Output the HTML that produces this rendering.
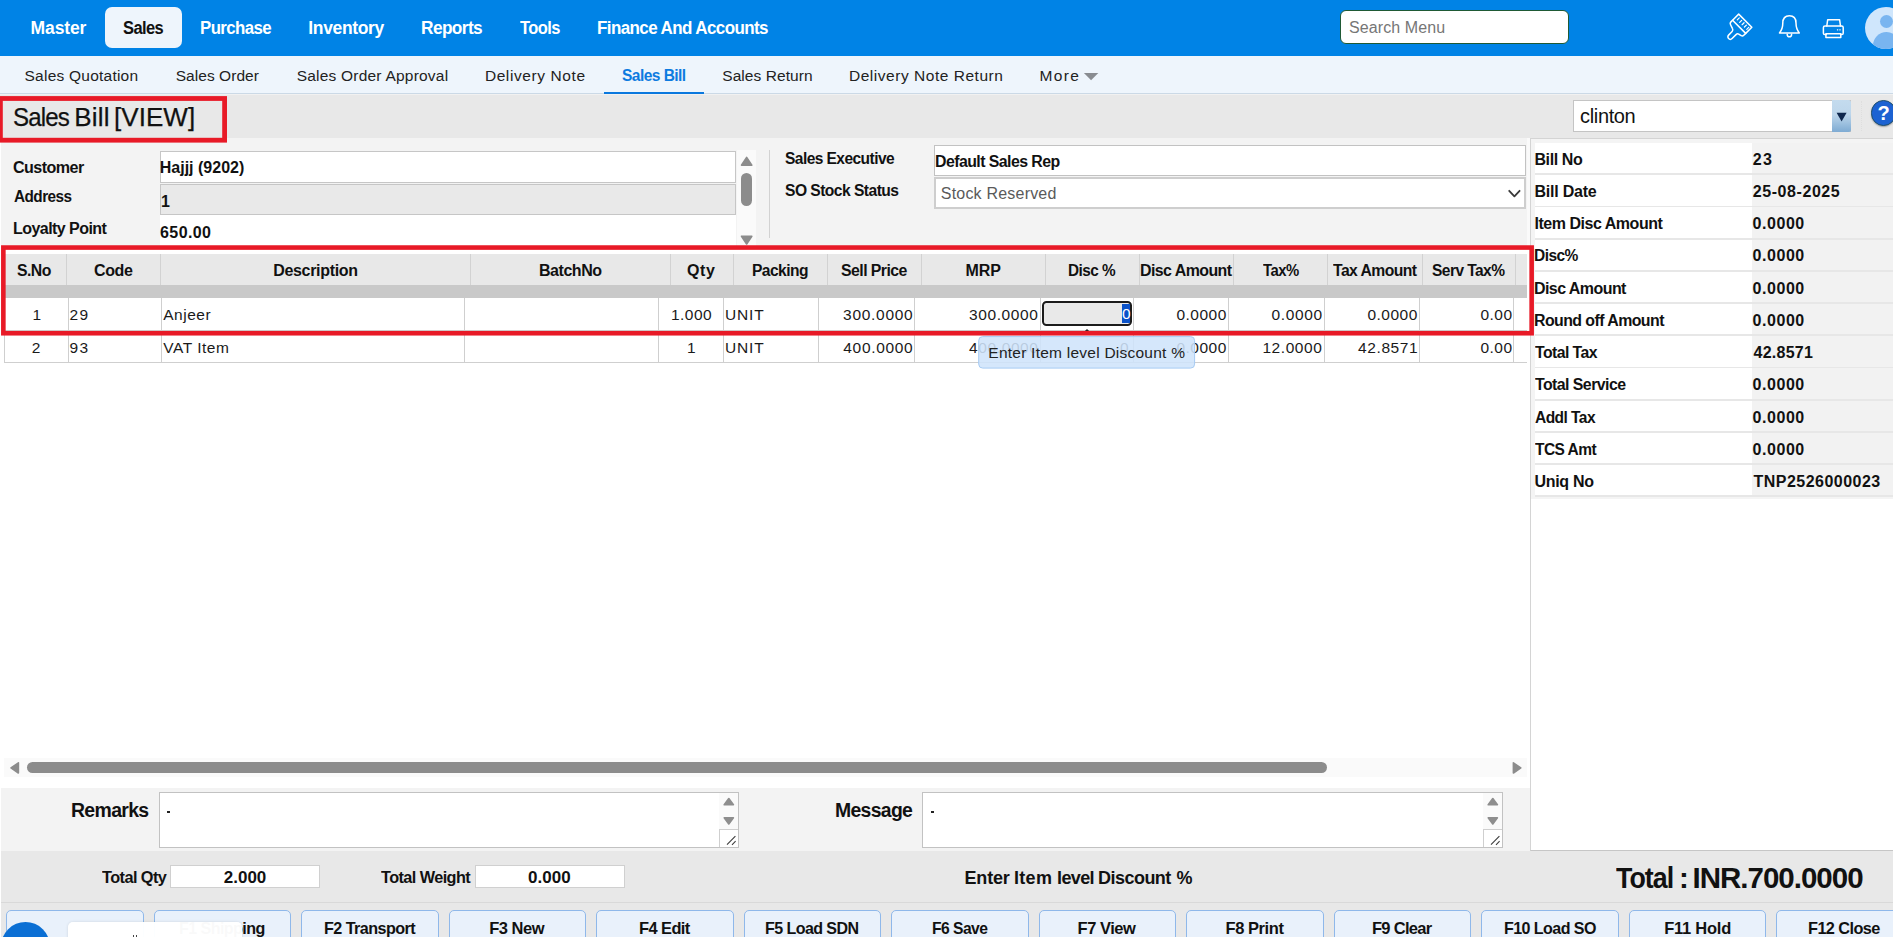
<!DOCTYPE html>
<html lang="en">
<head>
<meta charset="utf-8">
<title>Sales Bill [VIEW]</title>
<style>
html,body{margin:0;padding:0;}
body{width:1893px;height:937px;overflow:hidden;position:relative;background:#ffffff;font-family:"Liberation Sans",Arial,sans-serif;}
.a{position:absolute;box-sizing:border-box;}
.t{position:absolute;height:60px;line-height:60px;white-space:pre;font-family:"Liberation Sans",Arial,sans-serif;z-index:5;}
.vl{position:absolute;width:1px;background:#cfcfcf;}
.hl{position:absolute;height:1px;background:#cfcfcf;}
.btn{position:absolute;top:910px;height:40px;width:137.8px;box-sizing:border-box;border:1px solid #8fb8ea;border-radius:5px;background:#e9f1fb;}
.rl{position:absolute;left:1534.5px;width:217.7px;height:30.4px;background:#ffffff;}
.rv{position:absolute;left:1752.2px;width:140.8px;height:30.4px;background:#f2f2f2;}
.rs{position:absolute;left:1534.5px;width:358.5px;height:1.8px;background:#e7e7e7;}
</style>
</head>
<body>
<!-- top bar -->
<div class="a" id="topbar" style="left:0;top:0;width:1893px;height:56px;background:#0083e6;"></div>
<div class="a" style="left:105.2px;top:7.1px;width:76.6px;height:40.6px;border-radius:7px;background:#eef5fc;"></div>
<div class="a" style="left:1340px;top:10px;width:229px;height:34px;border-radius:6px;background:#fff;border:1px solid #1f5a35;"></div>

<svg class="a" style="left:1715px;top:5px;" width="50" height="45" viewBox="1715 5 50 45"><g fill="none" stroke="#ffffff" stroke-width="1.5" stroke-linejoin="round" stroke-linecap="round" transform="translate(1738.7 14.1) rotate(45)">
<path d="M0 0 H18.6 V8.7 H0 Z"/>
<path d="M0 8.7 V11 Q0 12.9 1.8 13.3 L5.6 14.5 Q7.7 15.1 7.7 17 V22 A2.45 2.45 0 0 0 12.6 22 V16.4 Q12.6 14.6 14.2 14.2 L17 13.5 Q18.6 13.1 18.6 11.4 V8.7"/>
<path d="M3.1 2.3 V5.1 M6.5 2.3 V5.1 M9.9 2.3 V5.1 M13.2 2.3 V5.1 M16.5 2.3 V5.1" stroke-width="1.2"/>
</g></svg>
<svg class="a" style="left:1776px;top:13px;" width="27" height="27" viewBox="0 0 27 27"><g fill="none" stroke="#ffffff" stroke-width="1.5" stroke-linejoin="round" stroke-linecap="round">
<path d="M13.4 2.7 C8.6 2.7 6.8 6.3 6.8 10 C6.8 15.4 5.4 17.6 3.5 19.9 L23.3 19.9 C21.4 17.6 20 15.4 20 10 C20 6.3 18.2 2.7 13.4 2.7 Z"/>
<path d="M11.2 21.2 C11.2 22.9 12.2 23.8 13.4 23.8 C14.6 23.8 15.6 22.9 15.6 21.2"/>
</g></svg>
<svg class="a" style="left:1820px;top:16px;" width="26" height="24" viewBox="0 0 26 24"><g fill="none" stroke="#ffffff" stroke-width="1.5" stroke-linejoin="round" stroke-linecap="round">
<path d="M6.8 10 L7.7 3.7 H19.6 L20.5 10"/>
<path d="M6.2 18.6 H4.8 Q3.4 18.6 3.4 17.2 V11.6 Q3.4 10 5 10 H21.6 Q23.2 10 23.2 11.6 V17.2 Q23.2 18.6 21.8 18.6 H20.6"/>
<path d="M5.9 17.7 H20.8 V21.5 H5.9 Z"/>
<path d="M17.4 13.8 H17.8 M19.8 13.8 H20.2" stroke-width="1.2"/>
</g></svg>
<div class="a" style="left:1865px;top:7px;width:42px;height:42px;border-radius:50%;background:#cfe6fc;overflow:hidden;">
<div class="a" style="left:14.5px;top:8px;width:13px;height:13px;border-radius:50%;background:#79b5f0;"></div>
<div class="a" style="left:7.5px;top:25.2px;width:27px;height:27px;border-radius:50%;background:#79b5f0;"></div>
</div>

<!-- sub nav -->
<div class="a" style="left:0;top:56px;width:1893px;height:37px;background:#eef5fc;"></div>
<div class="a" style="left:0;top:93px;width:1893px;height:1px;background:#cbd9e6;"></div>
<div class="a" style="left:604px;top:92px;width:100px;height:2px;background:#0a78de;"></div>
<svg class="a" style="left:1082px;top:71px;" width="19" height="12"><polygon points="1.9,2.0 16.3,2.0 9.1,9.3" fill="#898c91"/></svg>
<!-- title bar -->
<div class="a" style="left:0;top:94px;width:1893px;height:44px;background:#e8e8e8;"></div>
<div class="a" style="left:0;top:94px;width:1893px;height:1px;background:#f1f1f1;"></div>
<!-- clinton combo -->
<div class="a" style="left:1573px;top:100px;width:277.6px;height:31.6px;background:#fff;border:1px solid #c4c4c4;"></div>
<div class="a" style="left:1831.8px;top:100px;width:19.2px;height:31.6px;border-radius:0 2.5px 2.5px 0;background:linear-gradient(#c4dbee 0%,#bdd6eb 45%,#7eabd3 100%);"></div>
<svg class="a" style="left:1835px;top:111px;" width="13" height="12"><polygon points="1.6,1.7 11.6,1.7 6.6,10.5" fill="#10284e"/></svg>
<div class="a" style="left:1861px;top:101px;width:0;height:30px;border-left:1px dotted #dedede;"></div>
<div class="a" style="left:1870.8px;top:100px;width:25.6px;height:25.6px;border-radius:50%;background:#1c62d2;border:1.4px solid #1d4f6e;box-shadow:0 1px 1.5px rgba(0,0,0,.3);"></div>
<!-- form area -->
<div class="a" style="left:1px;top:138px;width:1529px;height:108px;background:#f3f3f3;"></div>
<div class="a" style="left:160px;top:214px;width:576px;height:32px;background:#ffffff;"></div>
<div class="a" style="left:160px;top:151px;width:576px;height:32px;background:#fff;border:1px solid #c6c6c6;"></div>
<div class="a" style="left:160px;top:184px;width:576px;height:31px;background:#e9e9e9;border:1px solid #c6c6c6;"></div>
<div class="a" style="left:736.6px;top:149.8px;width:19.2px;height:96px;background:#fafafa;"></div>
<svg class="a" style="left:739px;top:155px;" width="16" height="13"><polygon points="2.5,10.2 12.8,10.2 7.65,2.4" fill="#8c8c8c" stroke="#8c8c8c" stroke-width="1.6" stroke-linejoin="round"/></svg>
<div class="a" style="left:741px;top:173px;width:11px;height:32.8px;border-radius:5.5px;background:#8c8c8c;"></div>
<svg class="a" style="left:739px;top:234px;" width="16" height="13"><polygon points="2.5,2.2 12.8,2.2 7.65,10" fill="#8c8c8c" stroke="#8c8c8c" stroke-width="1.6" stroke-linejoin="round"/></svg>
<div class="a" style="left:769px;top:150px;width:1px;height:88px;background:#d2d2d2;"></div>
<div class="a" style="left:934px;top:145px;width:592px;height:31px;background:#fff;border:1px solid #c2c2c2;"></div>
<div class="a" style="left:934px;top:177px;width:592px;height:32px;background:#fff;border:2px solid #cecece;"></div>
<svg class="a" style="left:1507px;top:188px;" width="16" height="12" viewBox="0 0 16 12"><path d="M2.2 2.8 L7.4 8.4 L12.6 2.8" fill="none" stroke="#3a3a3a" stroke-width="1.8" stroke-linecap="round" stroke-linejoin="round"/></svg>
<div class="a" style="left:1527px;top:138px;width:3px;height:108px;background:#fafafa;"></div>
<!-- right panel -->
<div class="a" style="left:1530px;top:138px;width:363px;height:713px;background:#ffffff;border-left:1px solid #d4d4d4;border-top:1px solid #d4d4d4;border-bottom:1px solid #c6c6c6;"></div>
<div class="a" style="left:1531px;top:139px;width:362px;height:360px;background:#f4f4f4;"></div>
<div class="rl" style="top:143.0px"></div><div class="rv" style="top:143.0px"></div>
<div class="rs" style="top:173.4px"></div>
<div class="rl" style="top:175.2px"></div><div class="rv" style="top:175.2px"></div>
<div class="rs" style="top:205.6px"></div>
<div class="rl" style="top:207.4px"></div><div class="rv" style="top:207.4px"></div>
<div class="rs" style="top:237.8px"></div>
<div class="rl" style="top:239.6px"></div><div class="rv" style="top:239.6px"></div>
<div class="rs" style="top:270.0px"></div>
<div class="rl" style="top:271.8px"></div><div class="rv" style="top:271.8px"></div>
<div class="rs" style="top:302.2px"></div>
<div class="rl" style="top:304.0px"></div><div class="rv" style="top:304.0px"></div>
<div class="rs" style="top:334.4px"></div>
<div class="rl" style="top:336.2px"></div><div class="rv" style="top:336.2px"></div>
<div class="rs" style="top:366.6px"></div>
<div class="rl" style="top:368.4px"></div><div class="rv" style="top:368.4px"></div>
<div class="rs" style="top:398.8px"></div>
<div class="rl" style="top:400.6px"></div><div class="rv" style="top:400.6px"></div>
<div class="rs" style="top:431.0px"></div>
<div class="rl" style="top:432.8px"></div><div class="rv" style="top:432.8px"></div>
<div class="rs" style="top:463.2px"></div>
<div class="rl" style="top:465.0px"></div><div class="rv" style="top:465.0px"></div>
<div class="rs" style="top:495.4px"></div>
<!-- grid -->
<div class="a" style="left:5px;top:254px;width:1522px;height:31px;background:#e8e8e8;"></div>
<div class="a" style="left:5px;top:285px;width:1522px;height:12.5px;background:#c9c9c9;"></div>
<div class="vl" style="left:66.0px;top:254px;height:31px;background:#d2d2d2"></div>
<div class="vl" style="left:160.0px;top:254px;height:31px;background:#d2d2d2"></div>
<div class="vl" style="left:470.0px;top:254px;height:31px;background:#d2d2d2"></div>
<div class="vl" style="left:670.0px;top:254px;height:31px;background:#d2d2d2"></div>
<div class="vl" style="left:733.0px;top:254px;height:31px;background:#d2d2d2"></div>
<div class="vl" style="left:827.0px;top:254px;height:31px;background:#d2d2d2"></div>
<div class="vl" style="left:921.0px;top:254px;height:31px;background:#d2d2d2"></div>
<div class="vl" style="left:1045.0px;top:254px;height:31px;background:#d2d2d2"></div>
<div class="vl" style="left:1139.0px;top:254px;height:31px;background:#d2d2d2"></div>
<div class="vl" style="left:1233.0px;top:254px;height:31px;background:#d2d2d2"></div>
<div class="vl" style="left:1327.0px;top:254px;height:31px;background:#d2d2d2"></div>
<div class="vl" style="left:1422.0px;top:254px;height:31px;background:#d2d2d2"></div>
<div class="vl" style="left:1515.0px;top:254px;height:31px;background:#d2d2d2"></div>
<div class="vl" style="left:3.8px;top:297.5px;height:65px"></div>
<div class="vl" style="left:67.8px;top:297.5px;height:65px"></div>
<div class="vl" style="left:160.7px;top:297.5px;height:65px"></div>
<div class="vl" style="left:464.2px;top:297.5px;height:65px"></div>
<div class="vl" style="left:657.7px;top:297.5px;height:65px"></div>
<div class="vl" style="left:722.8px;top:297.5px;height:65px"></div>
<div class="vl" style="left:818.0px;top:297.5px;height:65px"></div>
<div class="vl" style="left:913.9px;top:297.5px;height:65px"></div>
<div class="vl" style="left:1040.0px;top:297.5px;height:65px"></div>
<div class="vl" style="left:1132.8px;top:297.5px;height:65px"></div>
<div class="vl" style="left:1228.2px;top:297.5px;height:65px"></div>
<div class="vl" style="left:1324.0px;top:297.5px;height:65px"></div>
<div class="vl" style="left:1418.8px;top:297.5px;height:65px"></div>
<div class="vl" style="left:1513.1px;top:297.5px;height:65px"></div>
<div class="hl" style="left:4px;top:330.3px;width:1523px"></div>
<div class="hl" style="left:4px;top:362px;width:1523px"></div>
<!-- grid input -->
<div class="a" style="left:1042px;top:301.3px;width:89.8px;height:24.4px;background:#e9e9e9;border:2px solid #1c1c1c;border-radius:4.5px;z-index:4;"></div>
<div class="a" style="left:1121.9px;top:304px;width:7.9px;height:19px;background:#0b52c9;z-index:4;"></div>
<!-- tooltip -->
<svg class="a" style="left:1081px;top:326px;z-index:3;" width="12" height="7"><polygon points="3.4,5.6 8.6,5.6 6.0,2.9" fill="#2a2a2a"/></svg>
<svg class="a" style="left:970px;top:330px;z-index:8;" width="235" height="45" viewBox="970 330 235 45"><rect x="978.7" y="336.6" width="215.9" height="31.5" rx="4" fill="rgba(207,228,250,0.88)" stroke="#a6cbf3" stroke-width="1"/></svg>
<!-- red boxes -->
<svg class="a" style="left:0;top:90px;z-index:7;" width="1540" height="250" viewBox="0 90 1540 250"><rect x="0.4" y="98.5" width="224.2" height="41.7" fill="none" stroke="#e81a27" stroke-width="4.8"/><rect x="3.35" y="247.55" width="1528.3" height="85.7" fill="none" stroke="#e81a27" stroke-width="4.6"/></svg>
<!-- h scrollbar -->
<div class="a" style="left:4px;top:758px;width:1523px;height:19px;background:#fafafa;"></div>
<div class="a" style="left:27px;top:762px;width:1300px;height:11px;border-radius:5.5px;background:#8c8c8c;"></div>
<svg class="a" style="left:8px;top:760px;" width="13" height="16"><polygon points="10.4,2.8 10.4,13.0 3.0,7.9" fill="#8c8c8c" stroke="#8c8c8c" stroke-width="1.6" stroke-linejoin="round"/></svg>
<svg class="a" style="left:1511px;top:760px;" width="13" height="16"><polygon points="2.4,2.8 2.4,13.0 9.8,7.9" fill="#8c8c8c" stroke="#8c8c8c" stroke-width="1.6" stroke-linejoin="round"/></svg>
<!-- remarks -->
<div class="a" style="left:1px;top:788px;width:1529px;height:63px;background:#f3f3f3;"></div>
<div class="a" style="left:158.5px;top:792.3px;width:580.3px;height:55.3px;background:#fff;border:1px solid #c2c2c2;"></div>
<div class="a" style="left:719.2px;top:793.3px;width:18.6px;height:53.3px;background:#fafafa;"></div>
<svg class="a" style="left:721.8px;top:796px;" width="14" height="31"><polygon points="2.2,8.8 11.4,8.8 6.8,2.6" fill="#8e8e8e" stroke="#8e8e8e" stroke-width="1.6" stroke-linejoin="round"/><polygon points="2.2,21.8 11.4,21.8 6.8,28" fill="#8e8e8e" stroke="#8e8e8e" stroke-width="1.6" stroke-linejoin="round"/></svg>
<div class="a" style="left:719.2px;top:828.8px;width:18.6px;height:17.8px;background:#fff;border-left:1px solid #cfcfcf;border-top:1px solid #cfcfcf;"></div>
<svg class="a" style="left:725.8px;top:835px;" width="11" height="11" viewBox="0 0 11 11"><path d="M1 9.6 L9.4 1.2 M6 9.8 L9.6 6.2" stroke="#3c3c3c" stroke-width="1.1" fill="none"/></svg>
<div class="a" style="left:167.1px;top:811.2px;width:2.6px;height:2.2px;background:#222;"></div>
<div class="a" style="left:922.4px;top:792.3px;width:580.3px;height:55.3px;background:#fff;border:1px solid #c2c2c2;"></div>
<div class="a" style="left:1483.1px;top:793.3px;width:18.6px;height:53.3px;background:#fafafa;"></div>
<svg class="a" style="left:1485.7px;top:796px;" width="14" height="31"><polygon points="2.2,8.8 11.4,8.8 6.8,2.6" fill="#8e8e8e" stroke="#8e8e8e" stroke-width="1.6" stroke-linejoin="round"/><polygon points="2.2,21.8 11.4,21.8 6.8,28" fill="#8e8e8e" stroke="#8e8e8e" stroke-width="1.6" stroke-linejoin="round"/></svg>
<div class="a" style="left:1483.1px;top:828.8px;width:18.6px;height:17.8px;background:#fff;border-left:1px solid #cfcfcf;border-top:1px solid #cfcfcf;"></div>
<svg class="a" style="left:1489.7px;top:835px;" width="11" height="11" viewBox="0 0 11 11"><path d="M1 9.6 L9.4 1.2 M6 9.8 L9.6 6.2" stroke="#3c3c3c" stroke-width="1.1" fill="none"/></svg>
<div class="a" style="left:931.0px;top:811.2px;width:2.6px;height:2.2px;background:#222;"></div>
<!-- footer -->
<div class="a" style="left:1px;top:851px;width:1892px;height:86px;background:#e8e8e8;"></div>
<div class="a" style="left:1px;top:902px;width:1892px;height:1px;background:#d9d9d9;"></div>
<div class="a" style="left:170px;top:865px;width:150px;height:23px;background:#fff;border:1px solid #d0d0d0;"></div>
<div class="a" style="left:475px;top:865px;width:150px;height:23px;background:#fff;border:1px solid #d0d0d0;"></div>
<div class="btn" style="left:6.10px"></div>
<div class="btn" style="left:153.60px"></div>
<div class="btn" style="left:301.10px"></div>
<div class="btn" style="left:448.60px"></div>
<div class="btn" style="left:596.10px"></div>
<div class="btn" style="left:743.60px"></div>
<div class="btn" style="left:891.10px"></div>
<div class="btn" style="left:1038.60px"></div>
<div class="btn" style="left:1186.10px"></div>
<div class="btn" style="left:1333.60px"></div>
<div class="btn" style="left:1481.10px"></div>
<div class="btn" style="left:1628.60px"></div>
<div class="btn" style="left:1776.10px"></div>
<!-- chat widget -->
<div class="a" style="left:0.5px;top:922.4px;width:49px;height:49px;border-radius:50%;background:#0b6fd4;z-index:10;"></div>
<div class="a" style="left:68px;top:921.6px;width:174px;height:30px;border-radius:5px 5px 0 0;background:rgba(255,255,255,0.975);z-index:10;box-shadow:0 0 3px rgba(0,0,0,.12);"></div>
<div class="a" style="left:133.4px;top:934.6px;width:1.1px;height:3px;background:#444;z-index:11;"></div><div class="a" style="left:135.6px;top:934.6px;width:1.1px;height:3px;background:#444;z-index:11;"></div>
<span class="t" style="left:30.56px;top:-2px;font-size:17.5px;font-weight:700;color:#ffffff;letter-spacing:-0.116px;">Master</span>
<span class="t" style="left:200.44px;top:-2px;font-size:17.5px;font-weight:700;color:#ffffff;letter-spacing:-0.613px;transform:scaleX(0.9611);transform-origin:0 50%;">Purchase</span>
<span class="t" style="left:308.32px;top:-2px;font-size:17.5px;font-weight:700;color:#ffffff;letter-spacing:-0.345px;">Inventory</span>
<span class="t" style="left:421.22px;top:-2px;font-size:17.5px;font-weight:700;color:#ffffff;letter-spacing:-0.613px;transform:scaleX(0.9876);transform-origin:0 50%;">Reports</span>
<span class="t" style="left:519.88px;top:-2px;font-size:17.5px;font-weight:700;color:#ffffff;letter-spacing:-0.613px;transform:scaleX(0.9401);transform-origin:0 50%;">Tools</span>
<span class="t" style="left:597.00px;top:-2px;font-size:17.5px;font-weight:700;color:#ffffff;letter-spacing:-0.613px;transform:scaleX(0.9708);transform-origin:0 50%;">Finance And Accounts</span>
<span class="t" style="left:123.00px;top:-2px;font-size:17.5px;font-weight:700;color:#111111;letter-spacing:-0.613px;transform:scaleX(0.9413);transform-origin:0 50%;">Sales</span>
<span class="t" style="left:1348.90px;top:-2px;font-size:16px;font-weight:400;color:#767676;letter-spacing:0.120px;">Search Menu</span>
<span class="t" style="left:24.56px;top:46px;font-size:15.5px;font-weight:400;color:#222222;letter-spacing:0.230px;">Sales Quotation</span>
<span class="t" style="left:175.68px;top:46px;font-size:15.5px;font-weight:400;color:#222222;letter-spacing:0.056px;">Sales Order</span>
<span class="t" style="left:296.68px;top:46px;font-size:15.5px;font-weight:400;color:#222222;letter-spacing:0.216px;">Sales Order Approval</span>
<span class="t" style="left:484.88px;top:46px;font-size:15.5px;font-weight:400;color:#222222;letter-spacing:0.593px;">Delivery Note</span>
<span class="t" style="left:722.22px;top:46px;font-size:15.5px;font-weight:400;color:#222222;letter-spacing:0.071px;">Sales Return</span>
<span class="t" style="left:849.00px;top:46px;font-size:15.5px;font-weight:400;color:#222222;letter-spacing:0.526px;">Delivery Note Return</span>
<span class="t" style="left:1039.44px;top:46px;font-size:15.5px;font-weight:400;color:#222222;letter-spacing:1.373px;">More</span>
<span class="t" style="left:622.00px;top:46px;font-size:16px;font-weight:700;color:#0d7be0;letter-spacing:-0.560px;transform:scaleX(0.9710);transform-origin:0 50%;">Sales Bill</span>
<span class="t" style="left:12.66px;top:87px;font-size:26px;font-weight:400;color:#111111;letter-spacing:-0.910px;transform:scaleX(0.9246);transform-origin:0 50%;-webkit-text-stroke:0.25px #111;">Sales</span>
<span class="t" style="left:74.34px;top:87px;font-size:26px;font-weight:400;color:#111111;letter-spacing:0.140px;-webkit-text-stroke:0.25px #111;">Bill</span>
<span class="t" style="left:114.00px;top:87px;font-size:26px;font-weight:400;color:#111111;letter-spacing:0.044px;-webkit-text-stroke:0.25px #111;">[VIEW]</span>
<span class="t" style="left:1580.12px;top:86px;font-size:20px;font-weight:400;color:#111111;letter-spacing:-0.370px;">clinton</span>
<span class="t" style="left:13.10px;top:138px;font-size:16px;font-weight:700;color:#111;letter-spacing:-0.560px;transform:scaleX(1.0055);transform-origin:0 50%;">Customer</span>
<span class="t" style="left:14.10px;top:167px;font-size:16px;font-weight:700;color:#111;letter-spacing:-0.560px;transform:scaleX(0.9565);transform-origin:0 50%;">Address</span>
<span class="t" style="left:13.10px;top:199px;font-size:16px;font-weight:700;color:#111;letter-spacing:-0.560px;transform:scaleX(1.0020);transform-origin:0 50%;">Loyalty Point</span>
<span class="t" style="left:159.78px;top:138px;font-size:16px;font-weight:700;color:#111;letter-spacing:0.000px;">Hajjj (9202)</span>
<span class="t" style="left:160.90px;top:172px;font-size:16px;font-weight:700;color:#111;letter-spacing:0.000px;">1</span>
<span class="t" style="left:160.10px;top:203px;font-size:16px;font-weight:700;color:#111;letter-spacing:0.380px;">650.00</span>
<span class="t" style="left:784.56px;top:129px;font-size:16px;font-weight:700;color:#111;letter-spacing:-0.560px;transform:scaleX(0.9690);transform-origin:0 50%;">Sales Executive</span>
<span class="t" style="left:784.56px;top:161px;font-size:16px;font-weight:700;color:#111;letter-spacing:-0.560px;transform:scaleX(0.9774);transform-origin:0 50%;">SO Stock Status</span>
<span class="t" style="left:935.12px;top:132px;font-size:16px;font-weight:700;color:#111;letter-spacing:-0.560px;transform:scaleX(0.9917);transform-origin:0 50%;">Default Sales Rep</span>
<span class="t" style="left:940.78px;top:164px;font-size:16px;font-weight:400;color:#5a5a5a;letter-spacing:0.205px;">Stock Reserved</span>
<span class="t" style="left:1534.44px;top:130px;font-size:16px;font-weight:700;color:#111;letter-spacing:-0.390px;">Bill No</span>
<span class="t" style="left:1752.76px;top:130px;font-size:16px;font-weight:700;color:#111;letter-spacing:1.240px;">23</span>
<span class="t" style="left:1534.44px;top:162px;font-size:16px;font-weight:700;color:#111;letter-spacing:-0.220px;">Bill Date</span>
<span class="t" style="left:1752.76px;top:162px;font-size:16px;font-weight:700;color:#111;letter-spacing:0.571px;">25-08-2025</span>
<span class="t" style="left:1534.44px;top:194px;font-size:16px;font-weight:700;color:#111;letter-spacing:-0.467px;">Item Disc Amount</span>
<span class="t" style="left:1752.56px;top:194px;font-size:16px;font-weight:700;color:#111;letter-spacing:0.552px;">0.0000</span>
<span class="t" style="left:1534.44px;top:226px;font-size:16px;font-weight:700;color:#111;letter-spacing:-0.560px;transform:scaleX(0.9683);transform-origin:0 50%;">Disc%</span>
<span class="t" style="left:1752.56px;top:226px;font-size:16px;font-weight:700;color:#111;letter-spacing:0.552px;">0.0000</span>
<span class="t" style="left:1534.44px;top:259px;font-size:16px;font-weight:700;color:#111;letter-spacing:-0.560px;transform:scaleX(0.9993);transform-origin:0 50%;">Disc Amount</span>
<span class="t" style="left:1752.56px;top:259px;font-size:16px;font-weight:700;color:#111;letter-spacing:0.552px;">0.0000</span>
<span class="t" style="left:1534.44px;top:291px;font-size:16px;font-weight:700;color:#111;letter-spacing:-0.560px;transform:scaleX(0.9928);transform-origin:0 50%;">Round off Amount</span>
<span class="t" style="left:1752.56px;top:291px;font-size:16px;font-weight:700;color:#111;letter-spacing:0.552px;">0.0000</span>
<span class="t" style="left:1535.44px;top:323px;font-size:16px;font-weight:700;color:#111;letter-spacing:-0.560px;transform:scaleX(0.9868);transform-origin:0 50%;">Total Tax</span>
<span class="t" style="left:1753.56px;top:323px;font-size:16px;font-weight:700;color:#111;letter-spacing:0.240px;">42.8571</span>
<span class="t" style="left:1535.44px;top:355px;font-size:16px;font-weight:700;color:#111;letter-spacing:-0.560px;transform:scaleX(0.9922);transform-origin:0 50%;">Total Service</span>
<span class="t" style="left:1752.56px;top:355px;font-size:16px;font-weight:700;color:#111;letter-spacing:0.552px;">0.0000</span>
<span class="t" style="left:1535.44px;top:388px;font-size:16px;font-weight:700;color:#111;letter-spacing:-0.560px;transform:scaleX(0.9701);transform-origin:0 50%;">Addl Tax</span>
<span class="t" style="left:1752.56px;top:388px;font-size:16px;font-weight:700;color:#111;letter-spacing:0.552px;">0.0000</span>
<span class="t" style="left:1535.44px;top:420px;font-size:16px;font-weight:700;color:#111;letter-spacing:-0.560px;transform:scaleX(0.9692);transform-origin:0 50%;">TCS Amt</span>
<span class="t" style="left:1752.56px;top:420px;font-size:16px;font-weight:700;color:#111;letter-spacing:0.552px;">0.0000</span>
<span class="t" style="left:1534.44px;top:452px;font-size:16px;font-weight:700;color:#111;letter-spacing:-0.297px;">Uniq No</span>
<span class="t" style="left:1753.56px;top:452px;font-size:16px;font-weight:700;color:#111;letter-spacing:0.473px;">TNP2526000023</span>
<span class="t" style="left:17.44px;top:241px;font-size:16px;font-weight:700;color:#111;letter-spacing:-0.560px;transform:scaleX(0.9871);transform-origin:0 50%;">S.No</span>
<span class="t" style="left:94.00px;top:241px;font-size:16px;font-weight:700;color:#111;letter-spacing:-0.407px;">Code</span>
<span class="t" style="left:273.22px;top:241px;font-size:16px;font-weight:700;color:#111;letter-spacing:-0.322px;">Description</span>
<span class="t" style="left:538.90px;top:241px;font-size:16px;font-weight:700;color:#111;letter-spacing:-0.430px;">BatchNo</span>
<span class="t" style="left:687.12px;top:241px;font-size:16px;font-weight:700;color:#111;letter-spacing:0.500px;">Qty</span>
<span class="t" style="left:751.66px;top:241px;font-size:16px;font-weight:700;color:#111;letter-spacing:-0.560px;transform:scaleX(0.9744);transform-origin:0 50%;">Packing</span>
<span class="t" style="left:840.78px;top:241px;font-size:16px;font-weight:700;color:#111;letter-spacing:-0.560px;transform:scaleX(0.9906);transform-origin:0 50%;">Sell Price</span>
<span class="t" style="left:965.56px;top:241px;font-size:16px;font-weight:700;color:#111;letter-spacing:-0.120px;">MRP</span>
<span class="t" style="left:1068.10px;top:241px;font-size:16px;font-weight:700;color:#111;letter-spacing:-0.560px;transform:scaleX(0.9566);transform-origin:0 50%;">Disc %</span>
<span class="t" style="left:1140.22px;top:241px;font-size:16px;font-weight:700;color:#111;letter-spacing:-0.560px;transform:scaleX(0.9956);transform-origin:0 50%;">Disc Amount</span>
<span class="t" style="left:1263.00px;top:241px;font-size:16px;font-weight:700;color:#111;letter-spacing:-0.560px;transform:scaleX(0.9277);transform-origin:0 50%;">Tax%</span>
<span class="t" style="left:1332.78px;top:241px;font-size:16px;font-weight:700;color:#111;letter-spacing:-0.560px;transform:scaleX(0.9812);transform-origin:0 50%;">Tax Amount</span>
<span class="t" style="left:1432.22px;top:241px;font-size:16px;font-weight:700;color:#111;letter-spacing:-0.560px;transform:scaleX(0.9695);transform-origin:0 50%;">Serv Tax%</span>
<span class="t" style="left:32.56px;top:285px;font-size:15.5px;font-weight:400;color:#1a1a1a;letter-spacing:0.000px;">1</span>
<span class="t" style="left:69.56px;top:285px;font-size:15.5px;font-weight:400;color:#1a1a1a;letter-spacing:1.220px;">29</span>
<span class="t" style="left:163.22px;top:285px;font-size:15.5px;font-weight:400;color:#1a1a1a;letter-spacing:0.512px;">Anjeer</span>
<span class="t" style="left:671.00px;top:285px;font-size:15.5px;font-weight:400;color:#1a1a1a;letter-spacing:0.445px;">1.000</span>
<span class="t" style="left:725.00px;top:285px;font-size:15.5px;font-weight:400;color:#1a1a1a;letter-spacing:0.853px;">UNIT</span>
<span class="t" style="left:843.12px;top:285px;font-size:15.5px;font-weight:400;color:#1a1a1a;letter-spacing:0.697px;">300.0000</span>
<span class="t" style="left:968.90px;top:285px;font-size:15.5px;font-weight:400;color:#1a1a1a;letter-spacing:0.631px;">300.0000</span>
<span class="t" style="left:1176.44px;top:285px;font-size:15.5px;font-weight:400;color:#1a1a1a;letter-spacing:0.488px;">0.0000</span>
<span class="t" style="left:1271.54px;top:285px;font-size:15.5px;font-weight:400;color:#1a1a1a;letter-spacing:0.648px;">0.0000</span>
<span class="t" style="left:1367.44px;top:285px;font-size:15.5px;font-weight:400;color:#1a1a1a;letter-spacing:0.488px;">0.0000</span>
<span class="t" style="left:1480.44px;top:285px;font-size:15.5px;font-weight:400;color:#1a1a1a;letter-spacing:0.487px;">0.00</span>
<span class="t" style="left:31.68px;top:318px;font-size:15.5px;font-weight:400;color:#1a1a1a;letter-spacing:0.000px;">2</span>
<span class="t" style="left:69.56px;top:318px;font-size:15.5px;font-weight:400;color:#1a1a1a;letter-spacing:1.220px;">93</span>
<span class="t" style="left:163.22px;top:318px;font-size:15.5px;font-weight:400;color:#1a1a1a;letter-spacing:0.523px;">VAT Item</span>
<span class="t" style="left:687.00px;top:318px;font-size:15.5px;font-weight:400;color:#1a1a1a;letter-spacing:0.000px;">1</span>
<span class="t" style="left:725.00px;top:318px;font-size:15.5px;font-weight:400;color:#1a1a1a;letter-spacing:0.853px;">UNIT</span>
<span class="t" style="left:843.32px;top:318px;font-size:15.5px;font-weight:400;color:#1a1a1a;letter-spacing:0.669px;">400.0000</span>
<span class="t" style="left:969.10px;top:318px;font-size:15.5px;font-weight:400;color:#1a1a1a;letter-spacing:0.603px;">400.0000</span>
<span class="t" style="left:1120.10px;top:318px;font-size:15.5px;font-weight:400;color:#1a1a1a;letter-spacing:0.000px;">0</span>
<span class="t" style="left:1176.44px;top:318px;font-size:15.5px;font-weight:400;color:#1a1a1a;letter-spacing:0.488px;">0.0000</span>
<span class="t" style="left:1262.44px;top:318px;font-size:15.5px;font-weight:400;color:#1a1a1a;letter-spacing:0.557px;">12.0000</span>
<span class="t" style="left:1358.00px;top:318px;font-size:15.5px;font-weight:400;color:#1a1a1a;letter-spacing:0.613px;">42.8571</span>
<span class="t" style="left:1480.44px;top:318px;font-size:15.5px;font-weight:400;color:#1a1a1a;letter-spacing:0.487px;">0.00</span>
<span class="t" style="left:1121.88px;top:284px;font-size:15.5px;font-weight:400;color:#ffffff;letter-spacing:0.000px;z-index:6;">0</span>
<span class="t" style="left:1877.44px;top:83px;font-size:20px;font-weight:700;color:#ffffff;letter-spacing:0.000px;">?</span>
<span class="t" style="left:71.22px;top:780px;font-size:20px;font-weight:700;color:#111;letter-spacing:-0.700px;transform:scaleX(0.9731);transform-origin:0 50%;">Remarks</span>
<span class="t" style="left:834.56px;top:780px;font-size:20px;font-weight:700;color:#111;letter-spacing:-0.700px;transform:scaleX(0.9701);transform-origin:0 50%;">Message</span>
<span class="t" style="left:101.56px;top:848px;font-size:17px;font-weight:700;color:#111;letter-spacing:-0.595px;transform:scaleX(0.9584);transform-origin:0 50%;">Total Qty</span>
<span class="t" style="left:223.76px;top:848px;font-size:17px;font-weight:700;color:#111;letter-spacing:0.005px;">2.000</span>
<span class="t" style="left:380.66px;top:848px;font-size:17px;font-weight:700;color:#111;letter-spacing:-0.595px;transform:scaleX(0.9558);transform-origin:0 50%;">Total Weight</span>
<span class="t" style="left:528.00px;top:848px;font-size:17px;font-weight:700;color:#111;letter-spacing:0.030px;">0.000</span>
<span class="t" style="left:964.56px;top:848px;font-size:18px;font-weight:700;color:#111;letter-spacing:-0.195px;">Enter</span>
<span class="t" style="left:1013.88px;top:848px;font-size:18px;font-weight:700;color:#111;letter-spacing:0.373px;">Item</span>
<span class="t" style="left:1056.56px;top:848px;font-size:18px;font-weight:700;color:#111;letter-spacing:-0.630px;transform:scaleX(1.0025);transform-origin:0 50%;">level</span>
<span class="t" style="left:1098.00px;top:848px;font-size:18px;font-weight:700;color:#111;letter-spacing:-0.523px;">Discount</span>
<span class="t" style="left:1176.44px;top:848px;font-size:18px;font-weight:700;color:#111;letter-spacing:0.000px;">%</span>
<span class="t" style="left:1616.22px;top:848px;font-size:29.5px;font-weight:700;color:#111;letter-spacing:-1.033px;transform:scaleX(0.9069);transform-origin:0 50%;">Total</span>
<span class="t" style="left:1679.00px;top:848px;font-size:29.5px;font-weight:700;color:#111;letter-spacing:0.000px;">:</span>
<span class="t" style="left:1692.56px;top:848px;font-size:29.5px;font-weight:700;color:#111;letter-spacing:-1.000px;">INR.700.0000</span>
<span class="t" style="left:179.10px;top:898px;font-size:16.5px;font-weight:700;color:#111;letter-spacing:-0.578px;transform:scaleX(0.9742);transform-origin:0 50%;">F1 Shipping</span>
<span class="t" style="left:323.61px;top:898px;font-size:16.5px;font-weight:700;color:#111;letter-spacing:-0.578px;transform:scaleX(0.9799);transform-origin:0 50%;">F2 Transport</span>
<span class="t" style="left:489.17px;top:898px;font-size:16.5px;font-weight:700;color:#111;letter-spacing:-0.468px;">F3 New</span>
<span class="t" style="left:638.83px;top:898px;font-size:16.5px;font-weight:700;color:#111;letter-spacing:-0.578px;transform:scaleX(0.9962);transform-origin:0 50%;">F4 Edit</span>
<span class="t" style="left:764.88px;top:898px;font-size:16.5px;font-weight:700;color:#111;letter-spacing:-0.578px;transform:scaleX(0.9708);transform-origin:0 50%;">F5 Load SDN</span>
<span class="t" style="left:931.66px;top:898px;font-size:16.5px;font-weight:700;color:#111;letter-spacing:-0.578px;transform:scaleX(0.9504);transform-origin:0 50%;">F6 Save</span>
<span class="t" style="left:1077.61px;top:898px;font-size:16.5px;font-weight:700;color:#111;letter-spacing:-0.503px;">F7 View</span>
<span class="t" style="left:1225.51px;top:898px;font-size:16.5px;font-weight:700;color:#111;letter-spacing:-0.431px;">F8 Print</span>
<span class="t" style="left:1371.90px;top:898px;font-size:16.5px;font-weight:700;color:#111;letter-spacing:-0.686px;">F9 Clear</span>
<span class="t" style="left:1504.12px;top:898px;font-size:16.5px;font-weight:700;color:#111;letter-spacing:-0.578px;transform:scaleX(0.9715);transform-origin:0 50%;">F10 Load SO</span>
<span class="t" style="left:1664.29px;top:898px;font-size:16.5px;font-weight:700;color:#111;letter-spacing:-0.254px;">F11 Hold</span>
<span class="t" style="left:1808.27px;top:898px;font-size:16.5px;font-weight:700;color:#111;letter-spacing:-0.578px;transform:scaleX(0.9874);transform-origin:0 50%;">F12 Close</span>
<span class="t" style="left:988.32px;top:323px;font-size:15.5px;font-weight:400;color:#222;letter-spacing:0.240px;z-index:9;">Enter Item level Discount %</span>
</body>
</html>
